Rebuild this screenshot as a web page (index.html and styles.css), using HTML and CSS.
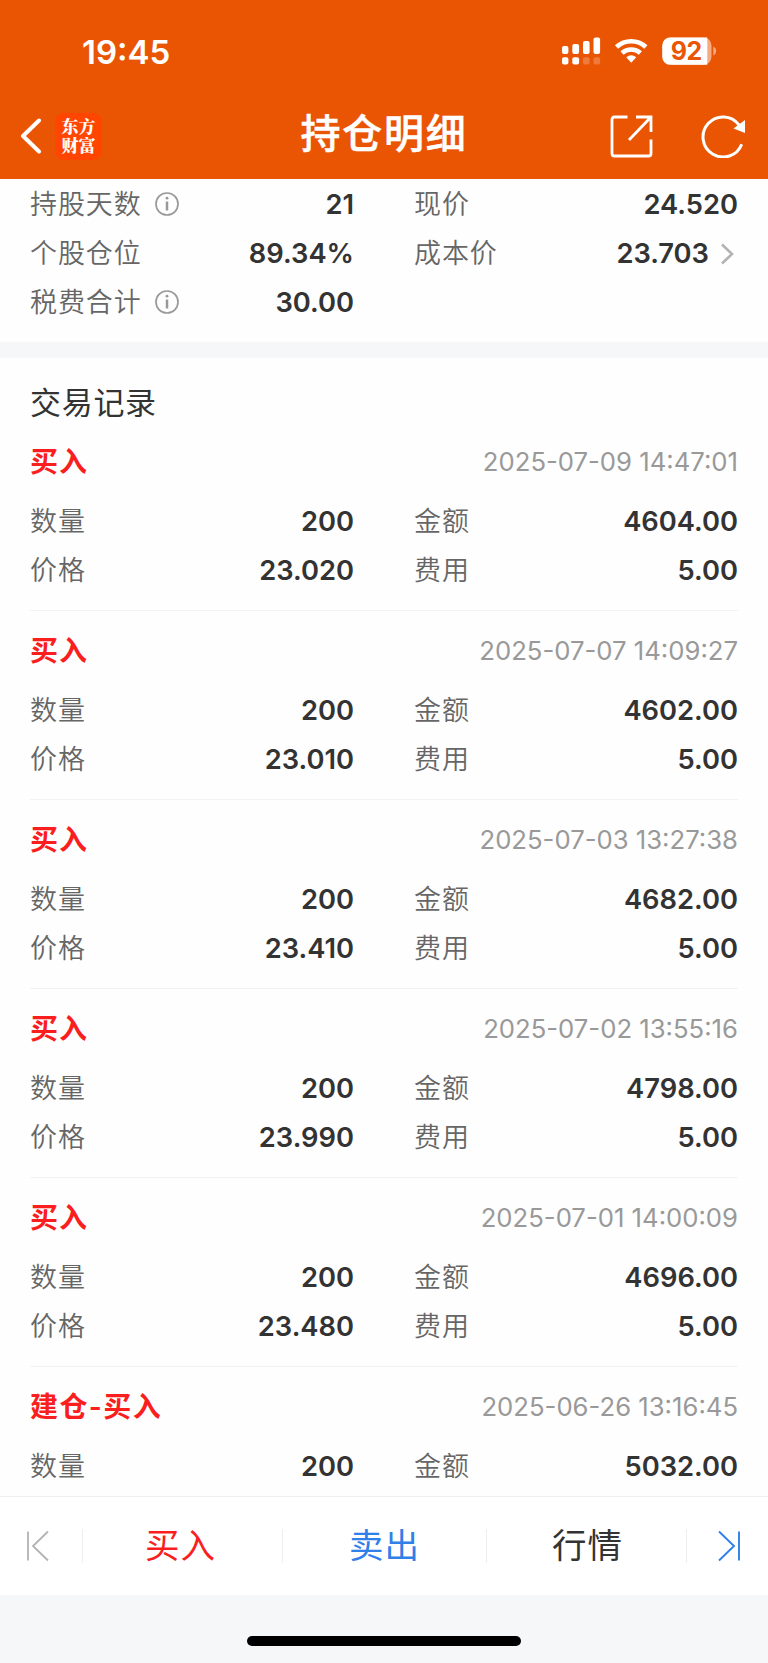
FILE: index.html
```html
<!DOCTYPE html>
<html lang="zh-CN">
<head>
<meta charset="utf-8">
<title>持仓明细</title>
<link rel="stylesheet" href="styles.css">
</head>
<body>
<div class="screen">
  <header class="header">
    <div class="status">
      <span class="time">19:45</span>
      <svg class="status-icons" width="156" height="28" viewBox="0 0 156 28">
        <g fill="#fff">
          <rect x="0" y="9" width="6.4" height="8" rx="2"/><rect x="10.3" y="7" width="6.8" height="10" rx="2"/><rect x="21" y="4" width="6.6" height="13" rx="2"/><rect x="31.5" y="0.6" width="6.6" height="16.4" rx="2"/>
          <rect x="0" y="20.2" width="6.4" height="7.4" rx="2"/><rect x="10.3" y="20.2" width="6.8" height="7.4" rx="2"/>
          <g opacity=".22"><rect x="21" y="20.2" width="6.6" height="7.4" rx="2"/><rect x="31.5" y="20.2" width="6.6" height="7.4" rx="2"/></g>
          <path d="M64.2 20.2 A8 8 0 0 1 74.2 20.2 L69.2 25.8 Z"/>
          <rect x="100.3" y="0.4" width="49.2" height="27.4" rx="8" opacity=".5"/>
          <path d="M108.3 .4 H145.3 V27.8 H108.3 A8 8 0 0 1 100.3 19.8 V8.4 A8 8 0 0 1 108.3 .4Z"/>
          <path d="M151.3 9.6 Q154.2 11 154.2 14.1 T151.3 18.6Z" opacity=".5"/>
        </g>
        <path d="M54.5 10 A21.5 21.5 0 0 1 83.9 10 M60 16 A13.8 13.8 0 0 1 78.4 16" fill="none" stroke="#fff" stroke-width="4.6"/>
        <text class="battery" x="124.2" y="23" text-anchor="middle">92</text>
      </svg>
    </div>
    <div class="nav">
      <div class="nav-left">
        <svg width="22" height="36" viewBox="0 0 22 36"><path d="M19 2.5 3 18 19 33.5" fill="none" stroke="#fff" stroke-width="4" stroke-linecap="round" stroke-linejoin="round"/></svg>
        <div class="logo">东方<br>财富</div>
      </div>
      <h1 class="title">持仓明细</h1>
      <div class="nav-right">
        <svg width="43" height="43" viewBox="0 0 43 43" fill="none" stroke="#fff" stroke-width="2.8"><path d="M17.5 2 H4.5 Q2 2 2 4.500 V38.500 Q2 41 4.500 41 H38.500 Q41 41 41 38.500 V24.500 M26 2 H41 V17 M41 2 19 25"/></svg>
        <svg width="45" height="44" viewBox="0 0 45 44"><path d="M40.700 30.200 A20 20 0 1 1 38 11" fill="none" stroke="#fff" stroke-width="3"/><path d="M44 6 V19 L32.500 14.500Z" fill="#fff"/></svg>
      </div>
    </div>
  </header>

  <section class="summary">
    <div class="cell"><span class="label">持股天数</span><svg class="info" width="26" height="26" viewBox="0 0 26 26"><circle cx="13" cy="13" r="11" fill="none" stroke="#999" stroke-width="1.700"/><circle cx="13" cy="7.200" r="1.400" fill="#999"/><path d="M13 10.500 V19.500" stroke="#999" stroke-width="2.500"/></svg><b class="value">21</b></div>
    <div class="cell"><span class="label">现价</span><b class="value">24.520</b></div>
    <div class="cell"><span class="label">个股仓位</span><b class="value">89.34%</b></div>
    <div class="cell"><span class="label">成本价</span><b class="value">23.703</b><svg class="chevron" width="29" height="24" viewBox="0 0 29 24"><path d="M13 2.500 23 12 13 21.500" fill="none" stroke="#b3b3b3" stroke-width="2.600"/></svg></div>
    <div class="cell"><span class="label">税费合计</span><svg class="info" width="26" height="26" viewBox="0 0 26 26"><circle cx="13" cy="13" r="11" fill="none" stroke="#999" stroke-width="1.700"/><circle cx="13" cy="7.200" r="1.400" fill="#999"/><path d="M13 10.500 V19.500" stroke="#999" stroke-width="2.500"/></svg><b class="value">30.00</b></div>
  </section>

  <main class="records">
    <h2 class="heading">交易记录</h2>
    <article class="record">
      <div class="record-head"><span class="side">买入</span><time class="date">2025-07-09 14:47:01</time></div>
      <div class="cell"><span class="label">数量</span><b class="value">200</b></div><div class="cell"><span class="label">金额</span><b class="value">4604.00</b></div>
      <div class="cell"><span class="label">价格</span><b class="value">23.020</b></div><div class="cell"><span class="label">费用</span><b class="value">5.00</b></div>
    </article>
    <article class="record">
      <div class="record-head"><span class="side">买入</span><time class="date">2025-07-07 14:09:27</time></div>
      <div class="cell"><span class="label">数量</span><b class="value">200</b></div><div class="cell"><span class="label">金额</span><b class="value">4602.00</b></div>
      <div class="cell"><span class="label">价格</span><b class="value">23.010</b></div><div class="cell"><span class="label">费用</span><b class="value">5.00</b></div>
    </article>
    <article class="record">
      <div class="record-head"><span class="side">买入</span><time class="date">2025-07-03 13:27:38</time></div>
      <div class="cell"><span class="label">数量</span><b class="value">200</b></div><div class="cell"><span class="label">金额</span><b class="value">4682.00</b></div>
      <div class="cell"><span class="label">价格</span><b class="value">23.410</b></div><div class="cell"><span class="label">费用</span><b class="value">5.00</b></div>
    </article>
    <article class="record">
      <div class="record-head"><span class="side">买入</span><time class="date">2025-07-02 13:55:16</time></div>
      <div class="cell"><span class="label">数量</span><b class="value">200</b></div><div class="cell"><span class="label">金额</span><b class="value">4798.00</b></div>
      <div class="cell"><span class="label">价格</span><b class="value">23.990</b></div><div class="cell"><span class="label">费用</span><b class="value">5.00</b></div>
    </article>
    <article class="record">
      <div class="record-head"><span class="side">买入</span><time class="date">2025-07-01 14:00:09</time></div>
      <div class="cell"><span class="label">数量</span><b class="value">200</b></div><div class="cell"><span class="label">金额</span><b class="value">4696.00</b></div>
      <div class="cell"><span class="label">价格</span><b class="value">23.480</b></div><div class="cell"><span class="label">费用</span><b class="value">5.00</b></div>
    </article>
    <article class="record">
      <div class="record-head"><span class="side wide">建仓-买入</span><time class="date">2025-06-26 13:16:45</time></div>
      <div class="cell"><span class="label">数量</span><b class="value">200</b></div><div class="cell"><span class="label">金额</span><b class="value">5032.00</b></div>
    </article>
  </main>

  <nav class="toolbar">
    <div class="tool edge first"><svg width="24" height="32" viewBox="0 0 24 32" fill="none" stroke="#b3b3b3" stroke-width="1.800"><path d="M2 1.500 V30.500 M22 1.500 7 16 22 30.500"/></svg></div>
    <div class="tool buy">买入</div>
    <div class="tool sell">卖出</div>
    <div class="tool quote">行情</div>
    <div class="tool edge last"><svg width="24" height="32" viewBox="0 0 24 32" fill="none" stroke="#2f80e8" stroke-width="1.900"><path d="M22 1.500 V30.500 M2 1.500 17 16 2 30.500"/></svg></div>
  </nav>
  <footer class="home"><div class="home-bar"></div></footer>
</div>
</body>
</html>
```
FILE: styles.css
```css
* { box-sizing: border-box; }
body { margin: 0; background: #fff; font-family: Inter, "Noto Sans CJK SC", sans-serif; color: #333; }
svg { display: block; flex: none; }
.screen { width: 768px; height: 1663px; display: flex; flex-direction: column; overflow: hidden; background: #fefefe; }
.header { flex: none; height: 179px; background: #ea5504; color: #fff; }
.status { height: 93px; padding: 37px 50px 0 82px; display: flex; justify-content: space-between; align-items: flex-start; }
.time { font-size: 33px; line-height: 30px; font-weight: 600; }
.battery { font: 700 25px Inter, sans-serif; fill: #ea5504; letter-spacing: -0.5px; }
.nav { height: 86px; padding: 0 22px 0 20px; display: grid; grid-template-columns: 182px 1fr 180px; align-items: center; }
.nav-left { display: flex; align-items: center; gap: 13px; }
.logo { width: 47px; height: 47px; padding-top: 3px; border-radius: 9px; background: #ff4500; text-align: center; font: 900 17px/19.5px "Noto Serif CJK SC", "Noto Sans CJK SC", serif; }
.title { margin: 0; padding-bottom: 4px; text-align: center; font-size: 40px; line-height: 60px; font-weight: 500; letter-spacing: 1.8px; white-space: nowrap; -webkit-text-stroke: 0.5px #fff; }
.nav-right { display: flex; justify-content: flex-end; align-items: center; gap: 48.500px; }
.summary { flex: none; height: 179px; padding: 1px 30px 0; border-bottom: 16px solid #f6f7f9; display: grid; grid-template-columns: 324px 324px; column-gap: 60px; grid-auto-rows: 49.2px; align-content: start; }
.cell { display: flex; align-items: center; font-size: 27.300px; line-height: 49px; }
.label { font-weight: 350; font-size: 27px; letter-spacing: 0.9px; color: #666; }
.info { margin: -1px 0 0 12px; }
.value { margin-left: auto; font-weight: 600; }
.records { flex: none; height: 1138px; overflow: hidden; padding: 0 30px; }
.heading { margin: 0; height: 64px; padding-top: 13px; font-size: 31px; line-height: 64px; font-weight: 400; letter-spacing: 0.7px; }
.record { height: 189px; border-bottom: 1px solid #f2f2f2; display: grid; grid-template-columns: 324px 324px; column-gap: 60px; grid-template-rows: 75px 49px 49px; }
.record-head { grid-column: 1 / 3; display: flex; justify-content: space-between; align-items: center; padding-top: 4px; }
.side { color: #fa1e1e; font-weight: 600; font-size: 28px; line-height: 40px; letter-spacing: 1px; }
.wide { letter-spacing: 1.4px; }
.date { color: #999; font-size: 25.700px; }
.toolbar { flex: none; height: 99px; border-top: 1px solid #eee; display: grid; grid-template-columns: 83px 200px 204px 200px 81px; align-items: center; font-size: 34.500px; letter-spacing: 1px; background: #fff; }
.tool { height: 34px; line-height: 32px; display: flex; justify-content: center; align-items: center; border-right: 1px solid #eee; }
.tool:last-child { border-right: 0; }
.first { padding-right: 6px; }
.last { padding-left: 3px; }
.buy { color: #fa1e1e; padding-right: 4px; }
.sell { color: #2f80e8; }
.quote { padding-left: 2px; }
.home { height: 68px; background: #f6f7f9; display: flex; justify-content: center; padding-top: 41px; }
.home-bar { width: 274px; height: 10px; border-radius: 5px; background: #000; }
```
